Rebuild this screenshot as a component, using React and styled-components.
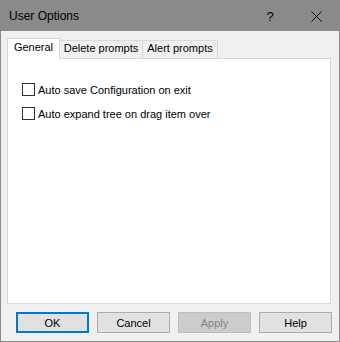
import React from "react";
import styled, { createGlobalStyle } from "styled-components";

const GlobalStyle = createGlobalStyle`
  html, body { margin: 0; padding: 0; background: #ffffff; }
  body { font-family: "Liberation Sans", Arial, sans-serif; }
  * { box-sizing: border-box; }
`;

const Window = styled.div`
  width: 340px;
  height: 342px;
  border: 1px solid #8a8a8a;
  background: #f0f0f0;
  display: flex;
  flex-direction: column;
  color: #000;
`;

const TitleBar = styled.div`
  height: 30px;
  background: #8a8a8a;
  display: flex;
  align-items: center;
  flex-shrink: 0;
`;

const Title = styled.div`
  flex: 1;
  padding-left: 8px;
  font-size: 12px;
  line-height: 30px;
`;

const TitleButton = styled.div`
  width: 46px;
  height: 30px;
  display: flex;
  align-items: center;
  justify-content: center;
  font-size: 13px;
`;

const Body = styled.div`
  flex: 1;
  display: flex;
  flex-direction: column;
  padding: 7px 7px 8px 6px;
`;

const TabStrip = styled.div`
  display: flex;
  align-items: flex-end;
  height: 20px;
  position: relative;
  z-index: 1;
`;

const Tab = styled.div`
  width: ${(p) => p.$w}px;
  height: ${(p) => (p.$active ? 21 : 18)}px;
  margin-bottom: ${(p) => (p.$active ? -1 : 0)}px;
  margin-left: ${(p) => (p.$first ? 0 : -1)}px;
  background: ${(p) => (p.$active ? "#ffffff" : "#f0f0f0")};
  border: 1px solid #d9d9d9;
  border-bottom: none;
  font-size: 11px;
  line-height: 13px;
  padding-top: ${(p) => (p.$active ? 2 : 1)}px;
  text-align: center;
  position: relative;
  z-index: ${(p) => (p.$active ? 2 : 1)};
`;

const Panel = styled.div`
  flex: 1;
  margin-right: 1px;
  background: #ffffff;
  border: 1px solid #d9d9d9;
  padding: 24px 0 0 14px;
  display: flex;
  flex-direction: column;
  gap: 11px;
`;

const CheckRow = styled.label`
  display: flex;
  align-items: flex-start;
  height: 13px;
  font-size: 11px;
`;

const Box = styled.span`
  width: 13px;
  height: 13px;
  border: 1px solid #333333;
  background: #ffffff;
  flex-shrink: 0;
`;

const CheckText = styled.span`
  margin-left: 3px;
  line-height: 13px;
  padding-top: 1px;
`;

const ButtonRow = styled.div`
  display: flex;
  justify-content: flex-end;
  gap: 8px;
  margin-top: 8px;
`;

const Button = styled.div`
  width: 73px;
  height: 21px;
  display: flex;
  align-items: center;
  justify-content: center;
  font-size: 11px;
  background: ${(p) => (p.$disabled ? "#cccccc" : "#e1e1e1")};
  color: ${(p) => (p.$disabled ? "#838383" : "#000000")};
  border: ${(p) =>
    p.$default ? "2px solid #0078d7" : p.$disabled ? "1px solid #bfbfbf" : "1px solid #adadad"};
`;

function CloseIcon() {
  return (
    <svg width="11" height="11" viewBox="0 0 11 11">
      <path d="M0.5 0.5 L10.5 10.5 M10.5 0.5 L0.5 10.5" stroke="#000" strokeWidth="1" fill="none" />
    </svg>
  );
}

export default function App() {
  return (
    <>
      <GlobalStyle />
      <Window>
        <TitleBar>
          <Title>User Options</Title>
          <TitleButton>?</TitleButton>
          <TitleButton>
            <CloseIcon />
          </TitleButton>
        </TitleBar>
        <Body>
          <TabStrip>
            <Tab $w={53} $active $first>General</Tab>
            <Tab $w={84}>Delete prompts</Tab>
            <Tab $w={76}>Alert prompts</Tab>
          </TabStrip>
          <Panel>
            <CheckRow>
              <Box />
              <CheckText>Auto save Configuration on exit</CheckText>
            </CheckRow>
            <CheckRow>
              <Box />
              <CheckText>Auto expand tree on drag item over</CheckText>
            </CheckRow>
          </Panel>
          <ButtonRow>
            <Button $default>OK</Button>
            <Button>Cancel</Button>
            <Button $disabled>Apply</Button>
            <Button>Help</Button>
          </ButtonRow>
        </Body>
      </Window>
    </>
  );
}
